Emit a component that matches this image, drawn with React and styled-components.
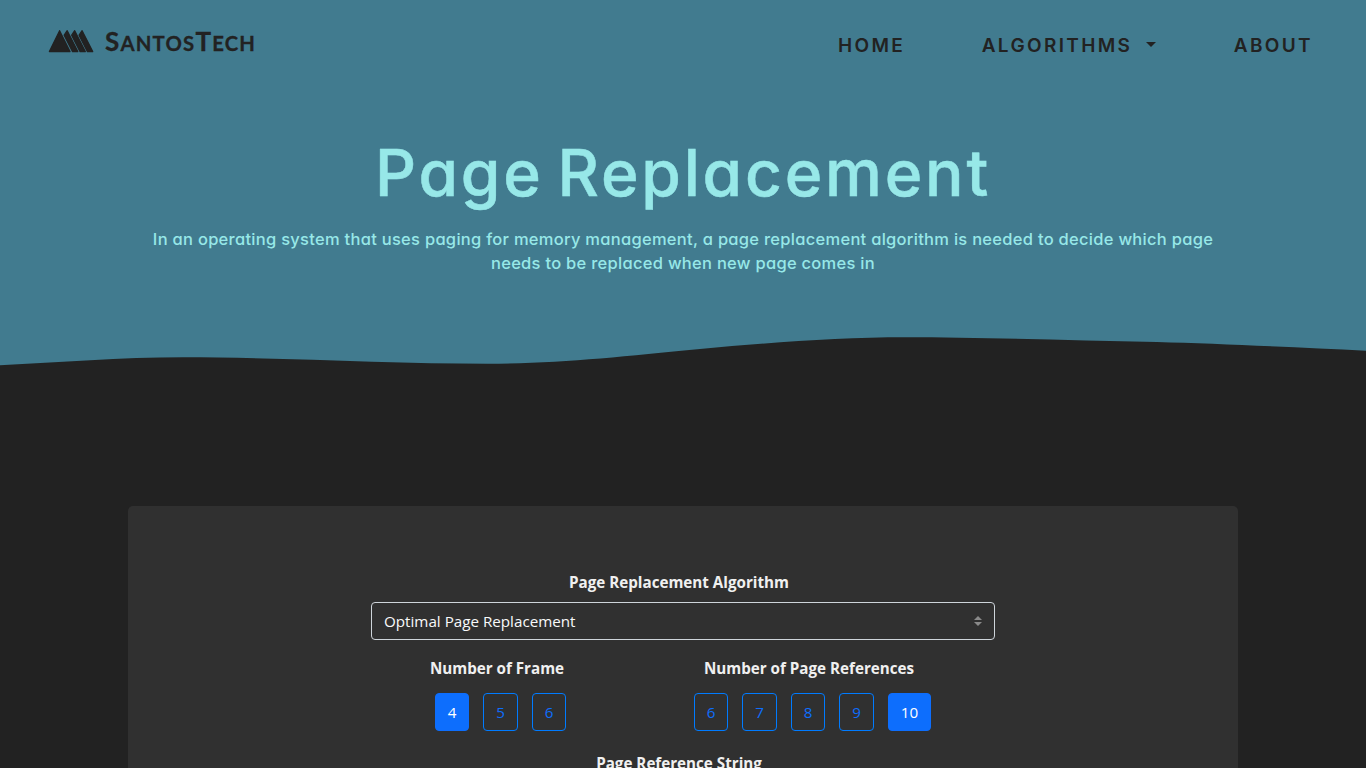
import React from "react";
import styled, { createGlobalStyle } from "styled-components";

const GlobalStyle = createGlobalStyle`
  *, *::before, *::after { box-sizing: border-box; }
  body {
    margin: 0;
    background: #222;
    color: #f0f0f0;
    font: 400 15.2px/24px "Open Sans", sans-serif;
  }
`;

const Page = styled.div`
  height: 768px;
  overflow: hidden;
`;

const Header = styled.header`
  height: 330px;
  background: #417b8f;
  font-family: Inter, sans-serif;
  font-feature-settings: "cv11";
`;

const Navbar = styled.nav`
  display: flex;
  justify-content: space-between;
  height: 90px;
  padding: 0 53px 0 48px;
  color: #222;
`;

const Brand = styled.a`
  display: flex;
  align-items: center;
  height: 82px;
  gap: 11px;
`;

const BrandMark = styled.svg`
  display: block;
  width: 46px;
  height: 24px;
`;

const BrandName = styled.span`
  padding-top: 2px;
  font: 700 26px/30px Lato, sans-serif;
  letter-spacing: 1.2px;
  white-space: nowrap;
  -webkit-text-stroke: 0.3px #222;
`;

const SmallCaps = styled.span`
  font-size: 20.3px;
  text-transform: uppercase;
`;

const NavLinks = styled.div`
  display: flex;
  align-items: center;
  height: 92px;
  gap: 76.5px;
`;

const NavLink = styled.a`
  display: flex;
  align-items: center;
  font-size: 19px;
  font-weight: 600;
  letter-spacing: 2.35px;
  text-transform: uppercase;
`;

const Caret = styled.span`
  margin: -4px 1px 0 14px;
  border: 5.5px solid transparent;
  border-top-color: #222;
  border-bottom: 0;
`;

const Hero = styled.div`
  display: flex;
  flex-direction: column;
  align-items: center;
  padding-top: 45px;
  color: #97e8e8;
  text-align: center;
`;

const Title = styled.h1`
  margin: 0 0 16px;
  font-size: 64px;
  line-height: 76px;
  font-weight: 500;
  letter-spacing: 2.8px;
  word-spacing: -6px;
  -webkit-text-stroke: 0.5px #97e8e8;
`;

const Lead = styled.p`
  width: 1110px;
  margin: 0;
  font-size: 16.5px;
  font-weight: 500;
  letter-spacing: 0.28px;
`;

const Wave = styled.svg`
  display: block;
  width: 100%;
  height: 40px;
`;

const Card = styled.main`
  display: flex;
  flex-direction: column;
  align-items: center;
  width: 1110px;
  height: 500px;
  margin: 136px auto 0;
  padding-top: 64px;
  border-radius: 5px;
  background: #303030;
`;

const Label = styled.div`
  padding-right: ${(p) => p.$shift || 0}px;
  font-weight: 700;
  white-space: nowrap;
`;

const Select = styled.div`
  display: flex;
  align-items: center;
  justify-content: space-between;
  width: 624px;
  height: 38px;
  margin: 8px 0 16px;
  padding: 0 12px;
  border: 1px solid #ced4da;
  border-radius: 4px;
  color: #f8f9fa;
`;

const SelectArrows = styled.svg`
  display: block;
  width: 8px;
  height: 10px;
`;

const Options = styled.div`
  display: grid;
  grid-template-columns: 312px 312px;
  width: 684px;
  margin-bottom: 20px;
`;

const OptionGroup = styled.div`
  display: flex;
  flex-direction: column;
  align-items: center;
  gap: 13px;
`;

const ButtonRow = styled.div`
  display: flex;
  gap: 13.9px;
  padding-left: 7px;
`;

const OptionButton = styled.button`
  width: ${(p) => (p.$wide ? 43.4 : 34.6)}px;
  height: 38px;
  padding: 0;
  border: 1px solid ${(p) => (p.$active ? "#0d6efd" : "#007bff")};
  border-radius: 4px;
  background: ${(p) => (p.$active ? "#0d6efd" : "transparent")};
  color: ${(p) => (p.$active ? "#fff" : "#0d6efd")};
  font: inherit;
`;

function Choices({ label, values, selected }) {
  return (
    <OptionGroup>
      <Label>{label}</Label>
      <ButtonRow>
        {values.map((v) => (
          <OptionButton key={v} $active={v === selected} $wide={v > 9}>
            {v}
          </OptionButton>
        ))}
      </ButtonRow>
    </OptionGroup>
  );
}

export default function App() {
  return (
    <Page>
      <GlobalStyle />
      <Header>
        <Navbar>
          <Brand>
            <BrandMark viewBox="0 0 46 24" fill="#222" stroke="#222" strokeWidth="1.3" strokeLinejoin="round">
              <path d="M11.6 1.7 L22 22.6 H1.4 Z" />
              <path d="M19.2 1.7 L29.8 22.6 H24.6 L16.2 6.2 Z" />
              <path d="M26.7 1.7 L37.3 22.6 H32.1 L23.7 6.2 Z" />
              <path d="M34.1 1.7 L44.7 22.6 H39.5 L31.1 6.2 Z" />
            </BrandMark>
            <BrandName>
              S<SmallCaps>antos</SmallCaps>T<SmallCaps>ech</SmallCaps>
            </BrandName>
          </Brand>
          <NavLinks>
            <NavLink>Home</NavLink>
            <NavLink>
              Algorithms
              <Caret />
            </NavLink>
            <NavLink>About</NavLink>
          </NavLinks>
        </Navbar>
        <Hero>
          <Title>Page Replacement</Title>
          <Lead>
            In an operating system that uses paging for memory management, a page
            replacement algorithm is needed to decide which page needs to be
            replaced when new page comes in
          </Lead>
        </Hero>
      </Header>
      <Wave viewBox="0 0 1366 40" preserveAspectRatio="none">
        <path
          fill="#417b8f"
          d="M0 0 H1366 V20.7 C1300 17.4 1220 13.8 1157 12 C1070 10.2 980 7.3 905 7.3 C840 7.3 770 12.4 700 19 C620 26.6 560 33.7 488 33.7 C390 33.7 280 27.3 183 27.3 C120 27.3 60 32.3 0 35.3 Z"
        />
      </Wave>
      <Card>
        <Label $shift={8}>Page Replacement Algorithm</Label>
        <Select>
          Optimal Page Replacement
          <SelectArrows viewBox="0 0 8 10" fill="#8a8a8a">
            <path d="M0 4 L4 0 L8 4 Z M0 6 H8 L4 10 Z" />
          </SelectArrows>
        </Select>
        <Options>
          <Choices label="Number of Frame" values={[4, 5, 6]} selected={4} />
          <Choices label="Number of Page References" values={[6, 7, 8, 9, 10]} selected={10} />
        </Options>
        <Label $shift={8}>Page Reference String</Label>
      </Card>
    </Page>
  );
}
